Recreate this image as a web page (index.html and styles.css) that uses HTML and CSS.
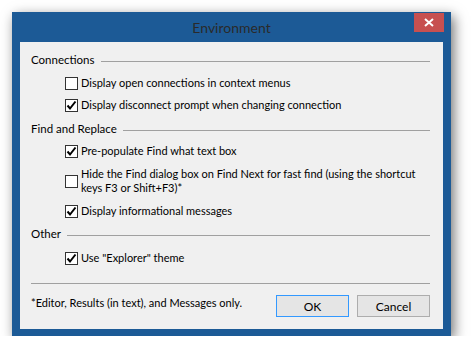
FILE: index.html
```html
<!DOCTYPE html>
<html lang="en">
<head>
    <meta charset="UTF-8">
    <title>Environment</title>
    <link rel="stylesheet" href="styles.css">
</head>
<body>
    <div class="window">
        <div class="titlebar">
            <span class="title">Environment</span>
            <span class="close">
                <svg width="10" height="9" viewBox="0 0 10 9"><path d="M1 1 L9 8 M9 1 L1 8" stroke="#fff" stroke-width="2"/></svg>
            </span>
        </div>
        <div class="client">
            <div class="group">Connections<span class="rule"></span></div>
            <label class="option o1"><span class="box"></span>Display open connections in context menus</label>
            <label class="option o2"><span class="box"><svg class="tick" viewBox="0 0 11 11"><path d="M1.5 5.5 L4 8.5 L9.5 1.5" fill="none" stroke="#000" stroke-width="2"/></svg></span>Display disconnect prompt when changing connection</label>

            <div class="group g2">Find and Replace<span class="rule"></span></div>
            <label class="option o3"><span class="box"><svg class="tick" viewBox="0 0 11 11"><path d="M1.5 5.5 L4 8.5 L9.5 1.5" fill="none" stroke="#000" stroke-width="2"/></svg></span>Pre-populate Find what text box</label>
            <label class="option o4"><span class="box"></span><span>Hide the Find dialog box on Find Next for fast find (using the shortcut<br>keys F3 or Shift+F3)*</span></label>
            <label class="option o5"><span class="box"><svg class="tick" viewBox="0 0 11 11"><path d="M1.5 5.5 L4 8.5 L9.5 1.5" fill="none" stroke="#000" stroke-width="2"/></svg></span>Display informational messages</label>

            <div class="group g3">Other<span class="rule"></span></div>
            <label class="option o6"><span class="box"><svg class="tick" viewBox="0 0 11 11"><path d="M1.5 5.5 L4 8.5 L9.5 1.5" fill="none" stroke="#000" stroke-width="2"/></svg></span>Use "Explorer" theme</label>

            <div class="separator"></div>
            <div class="footer">
                <span class="note">*Editor, Results (in text), and Messages only.</span>
                <button class="btn default">OK</button>
                <button class="btn">Cancel</button>
            </div>
        </div>
    </div>
</body>
</html>
```

FILE: styles.css
```css
body {
    margin: 0;
    background: #fff;
    font-family: Lato, "Liberation Sans", sans-serif;
    font-size: 11px;
    color: #000;
}
.window {
    margin: 12px 0 0 12px;
    width: 439px;
    height: 324px;
    box-sizing: border-box;
    background: #1c5a96;
    padding: 0 8px 7px 8px;
    box-shadow: 3px 4px 12px rgba(0, 0, 0, 0.55);
    display: flex;
    flex-direction: column;
}
.titlebar {
    height: 30px;
    position: relative;
    display: flex;
    justify-content: center;
    align-items: center;
}
.title {
    font-size: 14px;
    color: #2a2a2a;
    margin-top: 1px;
}
.close {
    position: absolute;
    right: -1px;
    top: 1px;
    width: 30px;
    height: 19px;
    background: #c75050;
    display: flex;
    justify-content: center;
    align-items: center;
}
.client {
    flex: 1;
    background: #f0f0f0;
    padding: 11px 13px 0 11px;
    line-height: 14px;
    white-space: nowrap;
}
.group {
    display: flex;
    align-items: center;
    font-size: 11.5px;
}
.rule {
    flex: 1;
    border-top: 1px solid #a0a0a0;
    margin-left: 6px;
    margin-top: 2px;
}
.g2 { margin-top: 10px; }
.g3 { margin-top: 9px; }
.option {
    display: flex;
    align-items: center;
    margin-left: 34px;
}
.o1 { margin-top: 9px; }
.o2 { margin-top: 8px; }
.o3 { margin-top: 8px; }
.o4 { margin-top: 9px; }
.o5 { margin-top: 9px; }
.o6 { margin-top: 10px; }
.box {
    width: 11px;
    height: 11px;
    border: 1px solid #333;
    background: #fff;
    margin-right: 3px;
    flex: none;
    display: flex;
}
.tick {
    width: 11px;
    height: 11px;
}
.separator {
    border-top: 1px solid #a0a0a0;
    margin-top: 18px;
}
.footer {
    display: flex;
    align-items: flex-start;
    margin-top: 11px;
}
.note {
    flex: 1;
    margin-top: 1px;
}
.btn {
    width: 73px;
    height: 22px;
    margin-left: 8px;
    background: #e5e5e5;
    border: 1px solid #adadad;
    font-family: inherit;
    font-size: 12px;
    color: #000;
    padding: 0;
}
.btn.default {
    border-color: #3399ff;
}
```
